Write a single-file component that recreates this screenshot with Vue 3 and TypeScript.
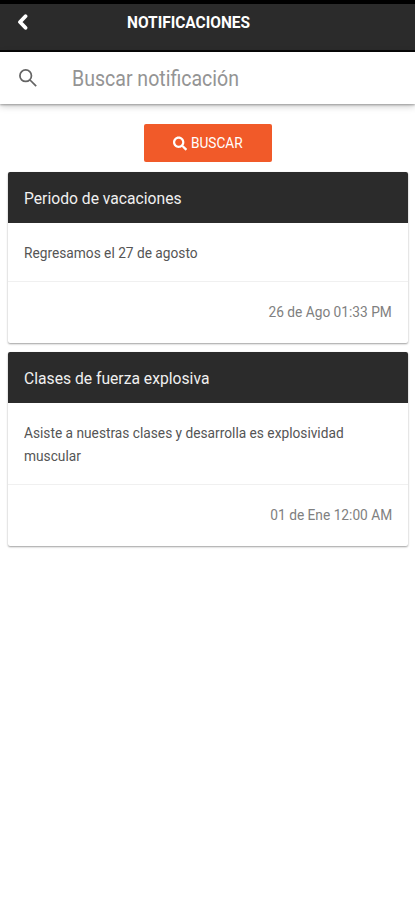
<script setup lang="ts">
interface Notice {
  id: number
  title: string
  body: string[]
  date: string
}

const notices: Notice[] = [
  { id: 1, title: 'Periodo de vacaciones', body: ['Regresamos el 27 de agosto'], date: '26 de Ago 01:33 PM' },
  {
    id: 2,
    title: 'Clases de fuerza explosiva',
    body: ['Asiste a nuestras clases y desarrolla es explosividad', 'muscular'],
    date: '01 de Ene 12:00 AM',
  },
]
</script>

<template>
  <div class="screen">
    <header class="topbar">
      <svg class="back" viewBox="0 0 12 18" aria-hidden="true">
        <path d="M9.5 3.200 4 9l5.500 5.800" />
      </svg>
      <h1><span class="fit">NOTIFICACIONES</span></h1>
    </header>

    <div class="search">
      <svg class="lens" viewBox="3 3 17.5 17.5" aria-hidden="true">
        <circle cx="9.5" cy="9.5" r="5.600" />
        <path d="m13.700 13.700 6 6" />
      </svg>
      <span class="fit placeholder">Buscar notificación</span>
    </div>

    <main>
      <button class="action" type="button">
        <svg viewBox="0 0 512 512" aria-hidden="true">
          <path
            d="M505 442.7 405.3 343c-4.500-4.500-10.600-7-17-7H372c27.600-35.300 44-79.700 44-128C416 93.100 322.900 0 208 0S0 93.100 0 208s93.100 208 208 208c48.300 0 92.700-16.400 128-44v16.300c0 6.400 2.500 12.500 7 17l99.700 99.700c9.400 9.400 24.600 9.400 33.900 0l28.300-28.300c9.400-9.400 9.400-24.600.1-34zM208 336c-70.700 0-128-57.200-128-128 0-70.700 57.200-128 128-128 70.700 0 128 57.200 128 128 0 70.700-57.200 128-128 128z"
          />
        </svg>
        <span class="fit">BUSCAR</span>
      </button>

      <article v-for="notice in notices" :key="notice.id" class="card">
        <h2><span class="fit">{{ notice.title }}</span></h2>
        <div class="body">
          <p v-for="line in notice.body" :key="line"><span class="fit">{{ line }}</span></p>
        </div>
        <footer><span class="fit">{{ notice.date }}</span></footer>
      </article>
    </main>
  </div>
</template>

<style>
body {
  background: #fff;
}
</style>

<style scoped>
.screen {
  height: 900px;
  overflow: hidden;
  background: #fff;
  font-family: Roboto, 'Liberation Sans', sans-serif;
}
.fit {
  display: inline-block;
  white-space: nowrap;
  transform-origin: left center;
}
.topbar {
  box-sizing: border-box;
  height: 52px;
  border-top: 4px solid #000;
  border-bottom: 2px solid #080808;
  background: #2b2b2b;
  display: grid;
  grid-template-columns: 127px 1fr;
  color: #fff;
}
.back {
  width: 12px;
  height: 18px;
  margin: 9px 0 0 16px;
  fill: none;
  stroke: #fff;
  stroke-width: 3.8;
  stroke-linecap: round;
  stroke-linejoin: round;
}
h1 {
  margin: 8px 0 0;
  font-size: 16px;
  line-height: 22px;
  font-weight: 700;
}
h1 .fit {
  transform: scaleX(0.967);
}
.search {
  height: 52px;
  display: flex;
  align-items: center;
  background: #fff;
  box-shadow: 0 1px 2px rgba(0, 0, 0, 0.3), 0 2px 7px rgba(0, 0, 0, 0.22);
}
.lens {
  width: 18px;
  height: 18px;
  margin: 0 35px 0 19px;
  fill: none;
  stroke: #646464;
  stroke-width: 1.7;
}
.placeholder {
  font-size: 22px;
  color: #949494;
  transform: scaleX(0.888);
}
main {
  padding: 20px 7px 0 8px;
  display: flex;
  flex-direction: column;
}
.action {
  align-self: center;
  width: 128px;
  height: 38px;
  margin-bottom: 10px;
  padding: 0;
  border: 0;
  border-radius: 2px;
  background: #f15a29;
  color: #fff;
  font: 400 15px Roboto, sans-serif;
  display: flex;
  align-items: center;
  justify-content: center;
  gap: 4px;
}
.action .fit {
  margin-right: -5px;
  transform: scaleX(0.91);
}
.action svg {
  width: 14px;
  height: 15px;
  fill: #fff;
}
.card {
  margin-bottom: 9px;
  border-radius: 2px;
  background: #fff;
  box-shadow: 0 1px 2px rgba(0, 0, 0, 0.38);
}
h2 {
  margin: 0;
  height: 51px;
  line-height: 52px;
  padding-left: 16px;
  border-radius: 2px 2px 0 0;
  background: #2b2b2b;
  color: #f0f0f0;
  font-size: 17px;
  font-weight: 400;
}
h2 .fit {
  transform: scaleX(0.922);
}
.body {
  padding: 19px 16px 16px;
  border-bottom: 1px solid #f0f0f0;
}
.body p {
  margin: 0;
  font-size: 14px;
  line-height: 23px;
  color: #555;
}
.body .fit {
  transform: scaleX(0.98);
}
footer {
  height: 61px;
  line-height: 61px;
  padding-right: 16px;
  text-align: right;
  font-size: 15px;
  color: #808080;
}
footer .fit {
  transform-origin: right center;
  transform: scaleX(0.915);
}
</style>
